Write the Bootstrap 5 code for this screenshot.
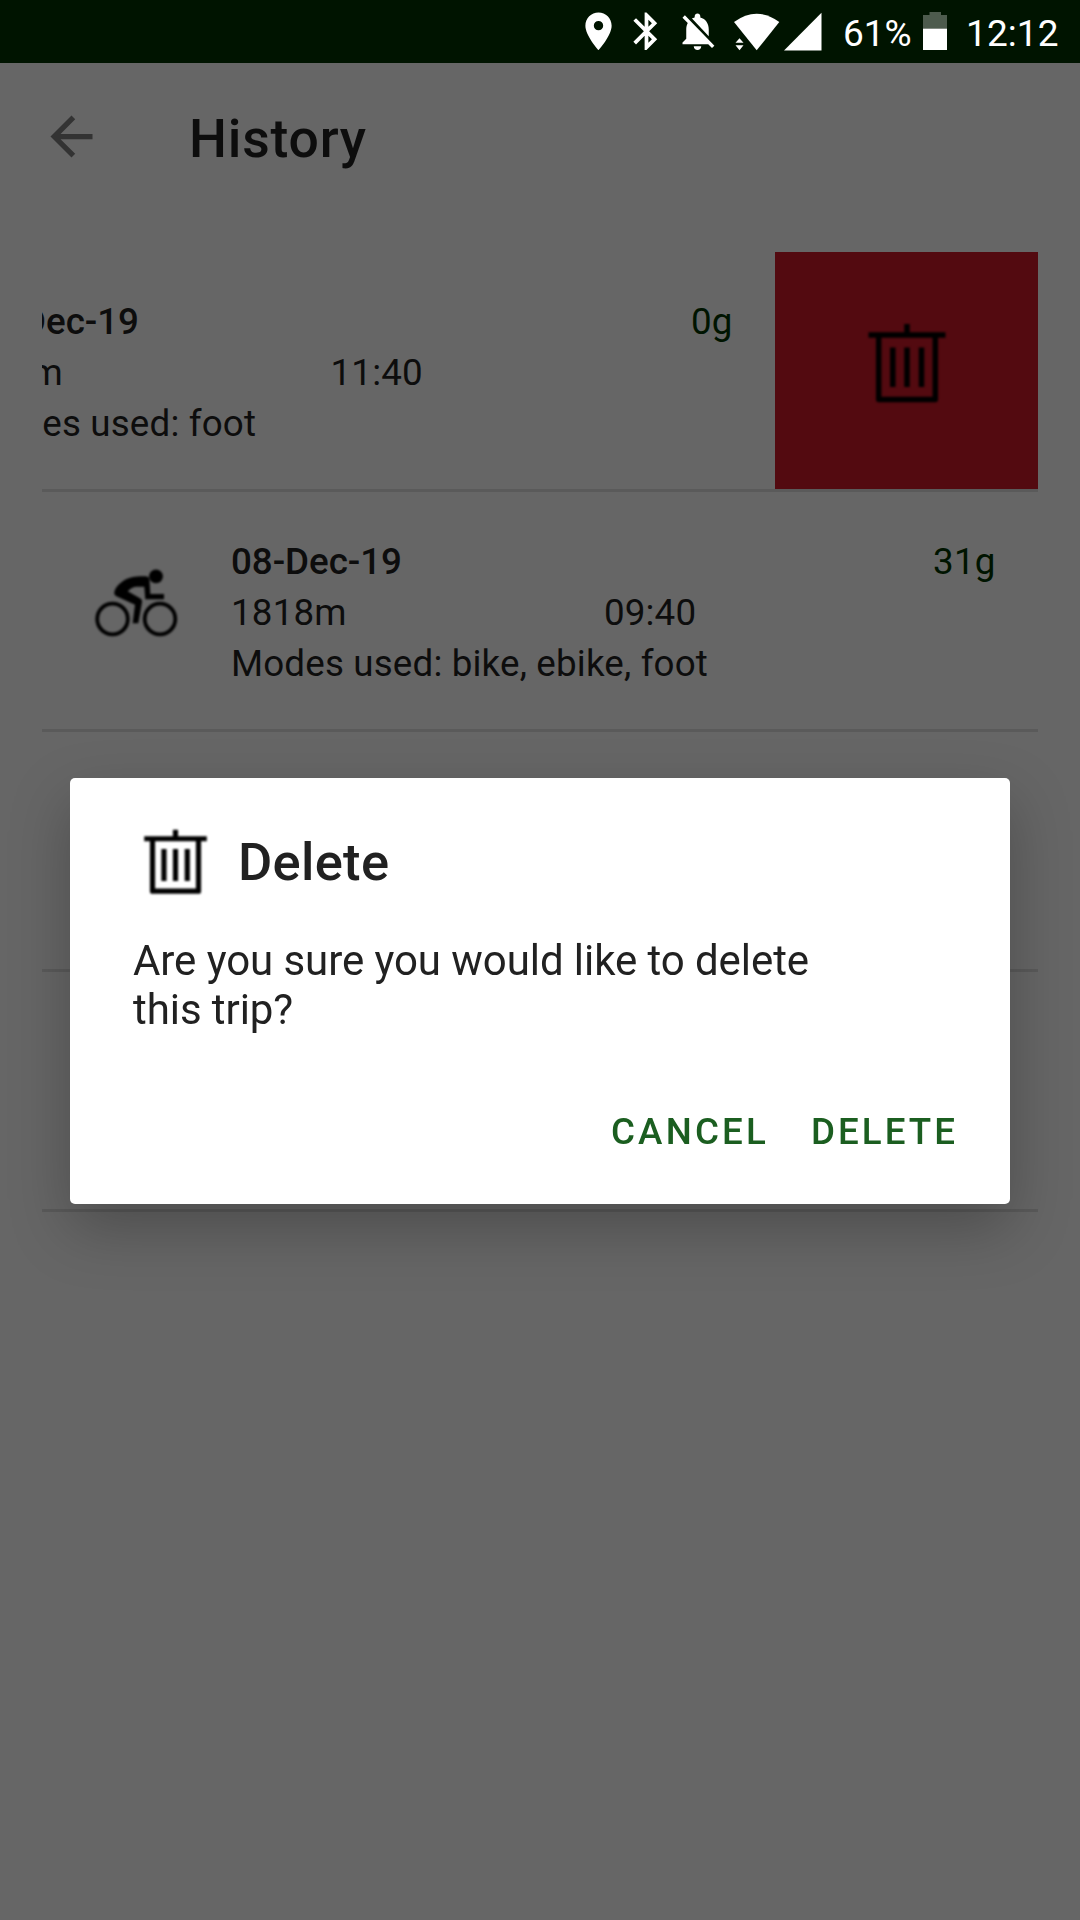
<!DOCTYPE html>
<html lang="en">
<head>
<meta charset="utf-8">
<meta name="viewport" content="width=device-width, initial-scale=1">
<title>History</title>
<link href="https://cdn.jsdelivr.net/npm/bootstrap@5.3.0/dist/css/bootstrap.min.css" rel="stylesheet">
<style>
  body { background: #666; color: #0d0d0d; font-family: Roboto, "Liberation Sans", sans-serif; height: 1920px; overflow: hidden; }
  .status { height: 63px; background: #001400; padding-left: 576px; color: #fff; font-size: 37px; line-height: 63px; }
  .status svg { flex: none; }
  .pct { width: 80px; margin-left: 21px; padding-top: 2px; letter-spacing: 0; }
  .clock { margin-left: 19px; padding-top: 2px; letter-spacing: .1px; }
  .medium { font-weight: 500; }
  .appbar { height: 147px; padding-left: 40px; }
  .appbar h1 { font-size: 53.5px; line-height: 62px; margin: 4px 0 0 86px; letter-spacing: .8px; }
  .trips { margin: 42px 42px 0; font-size: 36.75px; line-height: 51px; letter-spacing: .16px; }
  .trip { height: 240px; border-bottom: 3px solid #5a5a5a; }
  .trip-body { width: 996px; padding: 44px 42.5px 0 0; }
  .slot { width: 189px; padding-top: 32px; }
  .day { letter-spacing: -.05px; }
  .saved { color: #001400; }
  .start { padding-right: 42px; }
  .swipe { width: 263px; height: 237px; background: #530a10; padding: 71px 0 0; color: #000; }
  .soft { filter: blur(.9px); }
  .modal-dialog { width: 940px; max-width: none; margin: 778px 70px 0; }
  .modal-content { height: 426px; border: 0; border-radius: 5px; box-shadow: 0 24px 60px rgba(0,0,0,.25); color: #212121; }
  .modal-header { padding: 51px 73px 0; border: 0; justify-content: flex-start; }
  .modal-header svg { color: #000; stroke-width: 6.4; }
  .modal-title { font-size: 52.5px; line-height: 62px; margin: 1px 0 0 30px; letter-spacing: .3px; }
  .modal-body { flex: none; padding: 42px 63px 0; font-size: 42px; line-height: 49px; letter-spacing: -.07px; width: 860px; }
  .modal-footer { border: 0; padding: 73px 52px 0 0; gap: 42px; }
  .act { border: 0; padding: 0; margin: 0; background: none; color: #1b5e20; font-size: 36.75px; line-height: 50px; letter-spacing: 3.2px; }
  .act-delete { letter-spacing: 3px; }
</style>
</head>
<body>
<svg class="d-none" xmlns="http://www.w3.org/2000/svg">
  <symbol id="bin" viewBox="0 0 80 80">
    <g fill="none" stroke="currentColor">
      <path d="M1.500 12H78.500M40 1V12M11.700 12V76.500H68.300V12" stroke-linejoin="round"/>
      <path d="M25.800 24.500V64M40 24.500V64M54.500 24.500V64"/>
    </g>
  </symbol>
</svg>

<div class="status d-flex">
  <svg width="45" height="63" viewBox="0 -4.670 24 33.600" fill="#fff"><path d="M12 2C8.130 2 5 5.130 5 9c0 5.250 7 13 7 13s7-7.750 7-13c0-3.870-3.130-7-7-7zm0 9.500a2.500 2.500 0 1 1 0-5 2.500 2.500 0 0 1 0 5z"/></svg>
  <svg style="margin-left:3px" width="45" height="63" viewBox="0 -4.670 24 33.600" fill="#fff"><path d="M17.710 7.710L12 2h-1v7.590L6.410 5 5 6.410 10.590 12 5 17.590 6.410 19 11 14.410V22h1l5.710-5.710-4.300-4.290 4.300-4.290zM13 5.830l1.880 1.880L13 9.590V5.830zm1.880 10.460L13 18.170v-3.760l1.880 1.880z"/></svg>
  <svg style="margin-left:6px" width="45" height="63" viewBox="0 -4.670 24 33.600" fill="#fff"><path d="M20 18.690L7.840 6.140 5.270 3.490 4 4.760l2.800 2.800v.01c-.52.99-.8 2.160-.8 3.420v5l-2 2v1h13.730l2 2L21 19.720l-1-1.030zM12 22c1.110 0 2-.89 2-2h-4c0 1.110.89 2 2 2zm6-7.320V11c0-3.080-1.640-5.640-4.500-6.320V4c0-.83-.67-1.500-1.500-1.500s-1.500.67-1.500 1.500v.68c-.15.03-.29.08-.42.12-.56.18-.7.25-1.010.440L18 14.680z"/></svg>
  <svg style="margin-left:12px" width="48" height="63" viewBox="0 0 48 63" fill="#fff"><path d="M2 22Q24.700 5.500 47.300 22L24.700 50.300z"/><path d="M3.500 42.700L7.500 38.200L11.500 42.700zM3.500 45.300H11.500L7.500 50.200z"/></svg>
  <svg style="margin-left:4px" width="38" height="63" viewBox="0 0 38 63" fill="#fff"><path d="M0 50.500L37.500 12.700V50.500z"/></svg>
  <span class="pct">61%</span>
  <svg width="24" height="63" viewBox="0 0 24 63"><path d="M6.500 12H18v3h6v14H0V15h6.500z" fill="#4d5b4d"/><path d="M0 28.700H24V50H0z" fill="#fff"/></svg>
  <span class="clock">12:12</span>
</div>

<header class="appbar d-flex align-items-center">
  <svg width="63" height="63" viewBox="0 0 24 24" fill="#333"><path d="M20 11H7.830l5.590-5.590L12 4l-8 8 8 8 1.410-1.410L7.830 13H20v-2z"/></svg>
  <h1 class="medium">History</h1>
</header>

<main class="trips">
  <div class="trip d-flex justify-content-end overflow-hidden">
    <div class="trip-body d-flex flex-shrink-0">
      <div class="slot"></div>
      <div class="flex-grow-1">
        <div class="d-flex justify-content-between"><span class="day medium">08-Dec-19</span><span class="saved">0g</span></div>
        <div class="d-flex"><span>118m</span><span class="start flex-grow-1 text-center">11:40</span></div>
        <div>Modes used: foot</div>
      </div>
    </div>
    <div class="swipe flex-shrink-0 text-center lh-1"><svg class="soft" width="80" height="80" stroke-width="5.500"><use href="#bin"/></svg></div>
  </div>
  <div class="trip d-flex">
    <div class="trip-body d-flex flex-shrink-0">
      <div class="slot text-center lh-1">
        <svg class="soft" width="85" height="70" viewBox="0 0 85 70">
          <g fill="none" stroke="#000" stroke-width="3.800"><circle cx="18.500" cy="51" r="15.300"/><circle cx="66" cy="51" r="15.300"/></g>
          <circle cx="62" cy="8.300" r="6.900"/>
          <path d="M20.300 24C22 17 31 10.500 38 9.300C43 8.300 49 8 53 8.500Q55.500 9 55.500 12L56.300 26H70V31.300H51.300L50.300 18.700H42Q37 19.500 33.700 23.300L46 30.300Q48.500 31.500 48 34L44.300 55.300H38.700L41 36.700L23 28.500Q19.800 27 20.300 24z"/>
        </svg>
      </div>
      <div class="flex-grow-1">
        <div class="d-flex justify-content-between"><span class="day medium">08-Dec-19</span><span class="saved">31g</span></div>
        <div class="d-flex"><span>1818m</span><span class="start flex-grow-1 text-center">09:40</span></div>
        <div>Modes used: bike, ebike, foot</div>
      </div>
    </div>
  </div>
  <div class="trip"></div>
  <div class="trip"></div>
</main>

<div class="modal d-block overflow-hidden" tabindex="-1">
  <div class="modal-dialog">
    <div class="modal-content">
      <div class="modal-header">
        <svg class="soft" width="65" height="65"><use href="#bin"/></svg>
        <h2 class="modal-title medium">Delete</h2>
      </div>
      <div class="modal-body">Are you sure you would like to delete<br>this trip?</div>
      <div class="modal-footer d-flex justify-content-end">
        <button class="act medium" type="button">CANCEL</button>
        <button class="act act-delete medium" type="button">DELETE</button>
      </div>
    </div>
  </div>
</div>
<script src="https://cdn.jsdelivr.net/npm/bootstrap@5.3.0/dist/js/bootstrap.bundle.min.js"></script>
</body>
</html>
